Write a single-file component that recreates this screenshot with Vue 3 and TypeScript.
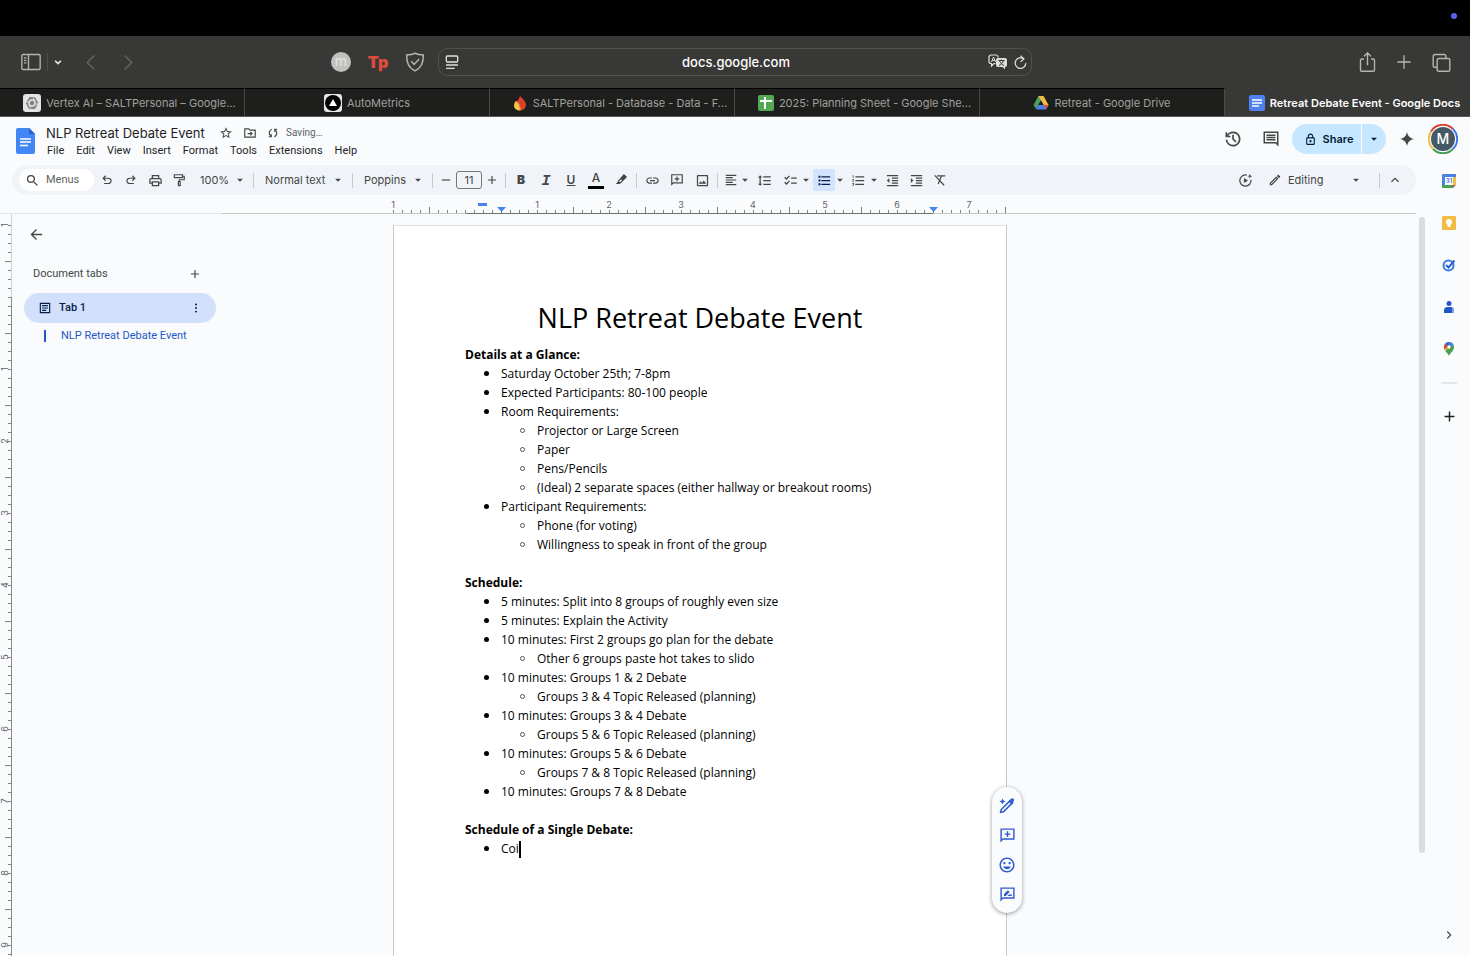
<script setup lang="ts">
import { h, ref } from 'vue'

interface Glyph { fill?: string; line?: string; w?: number }

const bubble = 'M22 2H2v20l4-4h16V2zm-2 14H5.17L4 17.17V4h16v12z'
const glyphs: Record<string, Glyph> = {
  search: { fill: 'M15.5 14h-.79l-.28-.27A6.471 6.471 0 0 0 16 9.5 6.5 6.5 0 1 0 9.5 16c1.61 0 3.09-.59 4.23-1.57l.27.28v.79l5 4.99L20.49 19l-4.99-5zm-6 0C7.01 14 5 11.99 5 9.5S7.01 5 9.5 5 14 7.01 14 9.5 11.99 14 9.5 14z' },
  undo: { fill: 'M7 19v-2h7.1q1.575 0 2.737-1T18 13.5T16.838 11T14.1 10H7.8l2.6 2.6L9 14L4 9l5-5l1.4 1.4L7.8 8h6.3q2.425 0 4.163 1.575T20 13.5t-1.737 3.925T14.1 19z' },
  redo: { fill: 'M9.9 19q-2.425 0-4.163-1.575T4 13.5t1.737-3.925T9.9 8h6.3l-2.6-2.6L15 4l5 5l-5 5l-1.4-1.4l2.6-2.6H9.9q-1.575 0-2.738 1T6 13.5T7.163 16T9.9 17H17v2z' },
  print: { fill: 'M19 8h-1V3H6v5H5c-1.66 0-3 1.34-3 3v6h4v4h12v-4h4v-6c0-1.66-1.34-3-3-3zM8 5h8v3H8V5zm8 12v2H8v-4h8v2zm2-2v-2H6v2H4v-4c0-.55.45-1 1-1h14c.55 0 1 .45 1 1v4h-2z' },
  paint: { line: 'M4 3h14v5H4zM18 5.500h3v6h-8.500v3M11 14.500h3v7h-3z', w: 2 },
  caret: { fill: 'M7 10l5 5 5-5z' },
  minus: { fill: 'M5 11h14v2H5z' },
  plus: { fill: 'M19 13h-6v6h-2v-6H5v-2h6V5h2v6h6v2z' },
  marker: { line: 'M8 13.500L17 3l4 4L11 16.500 8.500 17.500 7 16z', w: 2, fill: 'M11 10l6-7 4 4-6.500 6.500zM8 14l-5 5h6l2-2.500z' },
  link: { fill: 'M3.9 12c0-1.710 1.390-3.100 3.100-3.100h4V7H7c-2.760 0-5 2.240-5 5s2.240 5 5 5h4v-1.900H7c-1.710 0-3.100-1.390-3.100-3.100zM8 13h8v-2H8v2zm9-6h-4v1.900h4c1.710 0 3.100 1.390 3.100 3.100s-1.390 3.100-3.100 3.100h-4V17h4c2.760 0 5-2.240 5-5s-2.240-5-5-5z' },
  addComment: { fill: bubble + 'M11 14h2v-3h3V9h-3V6h-2v3H8v2h3z' },
  image: { fill: 'M19 5v14H5V5h14m0-2H5c-1.100 0-2 .9-2 2v14c0 1.100.9 2 2 2h14c1.100 0 2-.9 2-2V5c0-1.100-.9-2-2-2zM14.140 11.860l-3 3.870L9 13.140 6 17h12l-3.860-5.140z' },
  align: { fill: 'M15 15H3v2h12v-2zm0-8H3v2h12V7zM3 13h18v-2H3v2zm0 8h18v-2H3v2zM3 3v2h18V3H3z' },
  spacing: { fill: 'M6 7h2.500L5 3.500 1.500 7H4v10H1.500L5 20.500 8.500 17H6V7zm4-2v2h12V5H10zm0 14h12v-2H10v2zm0-6h12v-2H10v2z' },
  checklist: { fill: 'M22 7h-9v2h9V7zm0 8h-9v2h9v-2zM5.540 11L2 7.460l1.410-1.410 2.120 2.120 4.240-4.240 1.410 1.410L5.540 11zm0 8L2 15.460l1.410-1.410 2.120 2.120 4.240-4.240 1.410 1.410L5.540 19z' },
  bullets: { fill: 'M2.500 4.500h3v3h-3zM2.500 10.500h3v3h-3zM2.500 16.500h3v3h-3zM7 19h14v-2H7v2zm0-6h14v-2H7v2zm0-8v2h14V5H7z' },
  numbers: { fill: 'M2 17h2v.5H3v1h1v.5H2v1h3v-4H2v1zm1-9h1V4H2v1h1v3zm-1 3h1.800L2 13.100v.9h3v-1H3.200L5 10.900V10H2v1zm5-6v2h14V5H7zm0 14h14v-2H7v2zm0-6h14v-2H7v2z' },
  outdent: { fill: 'M11 17h10v-2H11v2zm-8-5l4 4V8l-4 4zm0 9h18v-2H3v2zM3 3v2h18V3H3zm8 6h10V7H11v2zm0 4h10v-2H11v2z' },
  indent: { fill: 'M3 21h18v-2H3v2zM3 8v8l4-4-4-4zm8 9h10v-2H11v2zM3 3v2h18V3H3zm8 6h10V7H11v2zm0 4h10v-2H11v2z' },
  clear: { line: 'M3 4l16 17M7 5h14M14.500 5L9 19', w: 2 },
  star: { fill: 'M22 9.240l-7.190-.62L12 2 9.190 8.630 2 9.240l5.460 4.730L5.820 21 12 17.270 18.180 21l-1.630-7.030L22 9.240zM12 15.400l-3.760 2.270 1-4.280-3.320-2.880 4.380-.38L12 6.100l1.710 4.040 4.380.38-3.320 2.880 1 4.280L12 15.400z' },
  move: { line: 'M3 5h7l2 2h9v12H3zM8 13h7M12.500 10l3 3-3 3', w: 2 },
  sync: { line: 'M9.500 4.500C2.500 8 3.500 15 8.500 19M3.500 19.500h5v-5M14.500 19.500C21.500 16 20.500 9 15.500 5M20.500 4.500h-5v5', w: 2.400 },
  history: { fill: 'M12 21q-3.450 0-6.012-2.287T3.050 13H5.100q.35 2.600 2.313 4.300T12 19q2.925 0 4.963-2.037T19 12t-2.037-4.962T12 5q-1.725 0-3.225.8T6.250 8H9v2H3V4h2v2.350q1.275-1.600 3.113-2.475T12 3q1.875 0 3.513.713t2.850 1.924t1.925 2.850T21 12t-.712 3.513t-1.925 2.850t-2.850 1.925T12 21m2.800-4.800L11 12.400V7h2v4.600l3.200 3.200z' },
  comment: { fill: 'M22 2H2v16h16l4 4V2zM20 4v13.170L18.830 16H4V4h16zM6 12h12v2H6zm0-3h12v2H6zm0-3h12v2H6z' },
  lock: { fill: 'M18 8h-1V6c0-2.760-2.240-5-5-5S7 3.240 7 6v2H6c-1.100 0-2 .9-2 2v10c0 1.100.9 2 2 2h12c1.100 0 2-.9 2-2V10c0-1.100-.9-2-2-2zM9 6c0-1.660 1.340-3 3-3s3 1.340 3 3v2H9V6zm9 14H6V10h12v10zm-6-3c1.100 0 2-.9 2-2s-.9-2-2-2-2 .9-2 2 .9 2 2 2z' },
  spark: { fill: 'M12 1c1 6.500 4.500 10 11 11-6.500 1-10 4.500-11 11-1-6.500-4.500-10-11-11 6.500-1 10-4.500 11-11z' },
  assist: { line: 'M14 3.300A9 9 0 1 0 20.800 11', w: 2, fill: 'M9.500 8v8l6.500-4zM19 1l1 3 3 1-3 1-1 3-1-3-3-1 3-1z' },
  pencil: { fill: 'M14.060 9.020l.92.92L5.920 19H5v-.92l9.060-9.060M17.660 3c-.25 0-.51.1-.7.29l-1.830 1.830 3.750 3.750 1.830-1.830c.39-.39.39-1.020 0-1.410l-2.340-2.340c-.2-.2-.45-.29-.71-.29zm-3.600 3.190L3 17.250V21h3.750L17.810 9.940l-3.750-3.750z' },
  up: { line: 'M6 15l6-6 6 6', w: 2 },
  right: { line: 'M9 6l6 6-6 6', w: 2 },
  back: { line: 'M21 12H4M12 4l-8 8 8 8', w: 2.200 },
  tab: { line: 'M4 4h16v16H4z', w: 2, fill: 'M7 7h10v2H7zM7 11h10v2H7zM7 15h7v2H7z' },
  dots: { fill: 'M12 7.500a1.700 1.700 0 1 0 0-3.400 1.700 1.700 0 0 0 0 3.400zM12 13.700a1.700 1.700 0 1 0 0-3.400 1.700 1.700 0 0 0 0 3.400zM12 19.900a1.700 1.700 0 1 0 0-3.400 1.700 1.700 0 0 0 0 3.400z' },
  magic: { line: 'M3.500 20.500l.8-3.800L16.500 4.500l3 3L7.300 19.700z', w: 2, fill: 'M6 2l1.200 2.800L10 6 7.200 7.200 6 10 4.800 7.200 2 6l2.800-1.200zM14 6l2.500-2.500 4 4L18 10zM19 1.500a2.500 2.500 0 1 1 0 5 2.500 2.500 0 0 1 0-5z' },
  emoji: { fill: 'M11.990 2C6.470 2 2 6.480 2 12s4.470 10 9.990 10C17.520 22 22 17.520 22 12S17.520 2 11.990 2zM12 20c-4.420 0-8-3.580-8-8s3.580-8 8-8 8 3.580 8 8-3.580 8-8 8zm3.500-9c.83 0 1.500-.67 1.500-1.500S16.330 8 15.500 8 14 8.670 14 9.500s.67 1.500 1.500 1.500zm-7 0c.83 0 1.500-.67 1.500-1.500S9.330 8 8.500 8 7 8.670 7 9.500 7.670 11 8.500 11zm3.500 6.500c2.330 0 4.310-1.460 5.110-3.500H6.890c.8 2.040 2.780 3.500 5.110 3.500z' },
  suggest: { fill: bubble + 'M7 14v-2.500l5.500-5.500L15 8.500 9.500 14zM12 14l2-2h4v2z' },
  sidebar: { line: 'M2.500 3h19a1.500 1.500 0 0 1 1.500 1.500v15a1.500 1.500 0 0 1-1.500 1.500h-19A1.500 1.500 0 0 1 1 19.500v-15A1.500 1.500 0 0 1 2.500 3zM9 3v18M3.500 7h3M3.500 10h3M3.500 13h3', w: 1.6 },
  down: { line: 'M5 9l7 7 7-7', w: 4 },
  prev: { line: 'M16 2L6 12l10 10', w: 2 },
  next: { line: 'M8 2l10 10L8 22', w: 2 },
  shield: { line: 'M12 1.500c3 1.500 6 2 10 2.200 0 9-2 14.800-10 19C4 18.500 2 12.700 2 3.700c4-.2 7-.7 10-2.200zM7.500 11l3.500 4 6-6.500', w: 1.8 },
  reader: { line: 'M5 3h14a1.500 1.500 0 0 1 1.500 1.500v6a1.500 1.500 0 0 1-1.500 1.500H5a1.500 1.500 0 0 1-1.500-1.500v-6A1.500 1.500 0 0 1 5 3zM3 16.500h18M3 21.500h13', w: 2 },
  reload: { line: 'M17.500 6.500A8.500 8.500 0 1 0 20.500 13M12 1l5.500 5.500L12 11', w: 2 },
  share: { line: 'M8 8H5.500A1.500 1.500 0 0 0 4 9.500v11A1.500 1.500 0 0 0 5.500 22h13a1.500 1.500 0 0 0 1.500-1.500v-11A1.500 1.500 0 0 0 18.500 8H16M12 15V1.500M8 5l4-4 4 4', w: 1.6 },
  add: { line: 'M12 2v20M2 12h20', w: 2 },
  windows: { line: 'M8.500 7h12A2 2 0 0 1 22.500 9v12a2 2 0 0 1-2 2h-12a2 2 0 0 1-2-2V9a2 2 0 0 1 2-2zM17.500 7V4a2 2 0 0 0-2-2h-12a2 2 0 0 0-2 2v12a2 2 0 0 0 2 2h3', w: 1.8 },
}

const Icon = (props: { name: string; size?: number }) => {
  const g = glyphs[props.name]
  const size = props.size ?? 16
  return h('svg', { width: size, height: size, viewBox: '0 0 24 24', 'aria-hidden': 'true' }, [
    g.fill ? h('path', { d: g.fill, fill: 'currentColor', 'fill-rule': 'evenodd' }) : null,
    g.line ? h('path', { d: g.line, fill: 'none', stroke: 'currentColor', 'stroke-width': g.w }) : null,
  ])
}
Icon.props = ['name', 'size']

const url = ref('docs.google.com')
const title = ref('NLP Retreat Debate Event')
const fontSize = ref('11')

const tabs = [
  { icon: 'vertex', text: 'Vertex AI – SALTPersonal – Google...', long: true },
  { icon: 'auto', text: 'AutoMetrics', long: false },
  { icon: 'fire', text: 'SALTPersonal - Database - Data - F...', long: true },
  { icon: 'sheets', text: '2025: Planning Sheet - Google She...', long: true },
  { icon: 'drive', text: 'Retreat - Google Drive', long: false },
  { icon: 'docs', text: 'Retreat Debate Event - Google Docs', long: true },
]
const menus = ['File', 'Edit', 'View', 'Insert', 'Format', 'Tools', 'Extensions', 'Help']

interface Item { text: string; sub?: string[]; caret?: boolean }
const sections: { heading: string; items: Item[] }[] = [
  {
    heading: 'Details at a Glance:',
    items: [
      { text: 'Saturday October 25th; 7-8pm' },
      { text: 'Expected Participants: 80-100 people' },
      { text: 'Room Requirements:', sub: ['Projector or Large Screen', 'Paper', 'Pens/Pencils', '(Ideal) 2 separate spaces (either hallway or breakout rooms)'] },
      { text: 'Participant Requirements:', sub: ['Phone (for voting)', 'Willingness to speak in front of the group'] },
    ],
  },
  {
    heading: 'Schedule:',
    items: [
      { text: '5 minutes: Split into 8 groups of roughly even size' },
      { text: '5 minutes: Explain the Activity' },
      { text: '10 minutes: First 2 groups go plan for the debate', sub: ['Other 6 groups paste hot takes to slido'] },
      { text: '10 minutes: Groups 1 & 2 Debate', sub: ['Groups 3 & 4 Topic Released (planning)'] },
      { text: '10 minutes: Groups 3 & 4 Debate', sub: ['Groups 5 & 6 Topic Released (planning)'] },
      { text: '10 minutes: Groups 5 & 6 Debate', sub: ['Groups 7 & 8 Topic Released (planning)'] },
      { text: '10 minutes: Groups 7 & 8 Debate' },
    ],
  },
  { heading: 'Schedule of a Single Debate:', items: [{ text: 'Coi', caret: true }] },
]

const inch = 72
const ticks = (count: number) => Array.from({ length: count }, (_, i) => ({ at: i * 9, half: i % 8 === 4 }))
const labels = (count: number) =>
  Array.from({ length: count }, (_, i) => ({ at: i * inch, n: Math.abs(i - 1) })).filter((l) => l.n > 0)
const hTicks = ticks(69)
const hLabels = labels(9)
const vTicks = ticks(82)
const vLabels = labels(11)
</script>

<template>
  <div class="screen">
    <div class="menubar"><i class="dot"></i></div>

    <header class="browser">
      <div class="nav">
        <button class="bb" aria-label="Sidebar"><Icon name="sidebar" :size="20" /></button>
        <i class="vline"></i>
        <button class="bb bright small" aria-label="Tab groups"><Icon name="down" :size="10" /></button>
        <button class="bb dim" aria-label="Back"><Icon name="prev" :size="17" /></button>
        <button class="bb dim" aria-label="Forward"><Icon name="next" :size="17" /></button>
        <div class="ext">
          <button class="bb"><span class="mcircle">m</span></button>
          <button class="bb"><span class="tp">Tp</span></button>
          <button class="bb" aria-label="Shield"><Icon name="shield" :size="20" /></button>
        </div>
      </div>
      <div class="url">
        <button class="ub" aria-label="Reader"><Icon name="reader" :size="16" /></button>
        <input v-model="url" aria-label="Address" />
        <button class="ub" aria-label="Translate">
          <svg width="20" height="16" viewBox="0 0 20 16">
            <path d="M10 3.500V3a2 2 0 0 0-2-2H3a2 2 0 0 0-2 2v4.500a2 2 0 0 0 2 2h.5V12l2.500-2.500h1.500" fill="none" stroke="#dededc" stroke-width="1.200" />
            <path d="M3.500 8L5.500 3l2 5M4.200 6.500h2.600" fill="none" stroke="#dededc" />
            <path d="M10 4h7a2 2 0 0 1 2 2v5a2 2 0 0 1-2 2v2.500L14.500 13H10a2 2 0 0 1-2-2V6a2 2 0 0 1 2-2z" fill="#dededc" />
            <path d="M10.500 6.500h6M13.500 5.500v1M15.500 6.500c-.5 2-2 4-4.500 5M11.500 6.500c.5 2 2 4 4.500 5" fill="none" stroke="#383836" />
          </svg>
        </button>
        <button class="ub" aria-label="Reload"><Icon name="reload" :size="15" /></button>
      </div>
      <div class="acts">
        <button class="bb" aria-label="Share"><Icon name="share" :size="21" /></button>
        <button class="bb" aria-label="New tab"><Icon name="add" :size="16" /></button>
        <button class="bb" aria-label="Tab overview"><Icon name="windows" :size="19" /></button>
      </div>
    </header>

    <nav class="tabs">
      <a v-for="(t, i) in tabs" :key="t.text" href="#" class="tab" :class="{ long: t.long, active: i === 5 }">
        <svg v-if="t.icon === 'vertex'" width="18" height="18" viewBox="0 0 18 18">
          <rect width="18" height="18" rx="3" fill="#e3e3e3" />
          <path d="M6.500 3h5.500L15.300 9 12 15H6L2.700 9z" fill="#828282" />
          <circle cx="9" cy="9" r="3" fill="none" stroke="#e3e3e3" stroke-width="1.500" />
          <path d="M2.500 8h3M12.500 10h3M10 3.500l2 3M6 11.500l2 3" stroke="#e3e3e3" />
        </svg>
        <svg v-else-if="t.icon === 'auto'" width="18" height="18" viewBox="0 0 18 18">
          <rect width="18" height="18" rx="3" fill="#e8e8e8" />
          <circle cx="9" cy="9" r="8" fill="#000" />
          <path d="M9 5l4 7H5z" fill="#fff" />
        </svg>
        <svg v-else-if="t.icon === 'fire'" width="16" height="16" viewBox="0 0 16 16">
          <path d="M8 1c3 3 6 5.500 6 9a5.500 5.500 0 0 1-6 5.500A5.500 5.500 0 0 1 3 10c0-2.500 4-5 5-9z" fill="#d9412a" />
          <path d="M3.500 6c2 1 5.500 3.500 5 9.300C5 16 2 13.500 2 10.500 2 8.500 3 7.500 3.500 6z" fill="#f7c544" />
          <path d="M8 15.500c1-3 .5-6-1.500-8-.8-1-2-1.500-3-1.500 2 1 4.500 5 4.500 9.500z" fill="#e8762d" />
        </svg>
        <svg v-else-if="t.icon === 'sheets'" width="16" height="16" viewBox="0 0 16 16">
          <rect width="16" height="16" rx="2" fill="#55a853" />
          <path d="M2 6h12M7 2v12" stroke="#fff" stroke-width="2" />
        </svg>
        <svg v-else-if="t.icon === 'drive'" width="16" height="14" viewBox="0 0 16 14">
          <path d="M5.500 0h5L8 4.500 3 13 .500 9z" fill="#4ba35a" />
          <path d="M5.500 0h5L15.500 9h-5z" fill="#f4bb41" />
          <path d="M5 9h10.500L13 13.500H3z" fill="#4a80ee" />
          <path d="M10.500 9h5L13 13.500z" fill="#dd4f3e" />
          <path d="M8 4.500L10.500 9h-5z" fill="#1e1e1d" />
        </svg>
        <svg v-else width="16" height="16" viewBox="0 0 16 16">
          <rect width="16" height="16" rx="2" fill="#4f80ee" />
          <path d="M3 5h10M3 8h10M3 11h7" stroke="#fff" stroke-width="1.500" />
        </svg>
        <span>{{ t.text }}</span>
      </a>
    </nav>

    <div class="dochead">
      <svg class="logo" width="20" height="26" viewBox="0 0 20 26">
        <path d="M2 0h11l6 6v18a2 2 0 0 1-2 2H2a2 2 0 0 1-2-2V2a2 2 0 0 1 2-2z" fill="#4285f4" />
        <path d="M13 0l6 6h-6z" fill="#2a62c9" />
        <path d="M4 11h11M4 14h11M4 17.500h8" stroke="#fff" stroke-width="1.500" />
      </svg>
      <div class="names">
        <div class="titlerow">
          <input v-model="title" class="title" aria-label="Document title" />
          <button class="ib" aria-label="Star"><Icon name="star" :size="14" /></button>
          <button class="ib" aria-label="Move"><Icon name="move" :size="14" /></button>
          <Icon name="sync" :size="12" /><span class="saving">Saving…</span>
        </div>
        <div class="menus"><button v-for="m in menus" :key="m">{{ m }}</button></div>
      </div>
      <div class="headacts">
        <button class="ib" aria-label="History"><Icon name="history" :size="20" /></button>
        <button class="ib" aria-label="Comments"><Icon name="comment" :size="18" /></button>
        <div class="sharepill">
          <button class="sharemain"><Icon name="lock" :size="13" />Share</button>
          <button class="sharemore" aria-label="Share options"><Icon name="caret" :size="14" /></button>
        </div>
        <button class="ib spark" aria-label="Ask Gemini"><Icon name="spark" :size="16" /></button>
        <button class="ib avatar" aria-label="Account">
          <svg width="30" height="30" viewBox="0 0 30 30">
            <g fill="none" stroke-width="2">
              <path d="M3 7.500A14 14 0 0 1 25 5" stroke="#d93f31" />
              <path d="M25 5a14 14 0 0 1 0 20" stroke="#4073e8" />
              <path d="M25 25A14 14 0 0 1 5 25" stroke="#3f9c4c" />
              <path d="M5 25A14 14 0 0 1 3 7.500" stroke="#eebc3e" />
            </g>
            <circle cx="15" cy="15" r="12" fill="#455a64" />
            <text x="15" y="20" text-anchor="middle" class="initial">M</text>
          </svg>
        </button>
      </div>
    </div>

    <div class="body">
      <div class="left">
        <div class="toolbar">
          <label class="search"><Icon name="search" :size="15" /><input placeholder="Menus" aria-label="Menus" /></label>
          <div class="group">
            <button v-for="n in ['undo', 'redo', 'print', 'paint']" :key="n" class="tb" :aria-label="n"><Icon :name="n" :size="n === 'print' ? 15 : 14" /></button>
          </div>
          <label class="drop zoom"><select aria-label="Zoom"><option>100%</option></select><Icon name="caret" :size="14" /></label>
          <i class="sep"></i>
          <label class="drop style"><select aria-label="Styles"><option>Normal text</option></select><Icon name="caret" :size="14" /></label>
          <i class="sep"></i>
          <label class="drop font"><select aria-label="Font"><option>Poppins</option></select><Icon name="caret" :size="14" /></label>
          <i class="sep"></i>
          <button class="step" aria-label="Decrease font size"><Icon name="minus" :size="14" /></button>
          <input v-model="fontSize" class="size" aria-label="Font size" />
          <button class="step" aria-label="Increase font size"><Icon name="plus" :size="14" /></button>
          <i class="sep"></i>
          <div class="group one">
            <button class="tb letter"><b>B</b></button>
            <button class="tb letter slant"><i>I</i></button>
            <button class="tb letter"><u>U</u></button>
            <button class="tb letter color">A</button>
            <button class="tb" aria-label="Highlight"><Icon name="marker" :size="14" /></button>
          </div>
          <i class="sep"></i>
          <div class="group one">
            <button class="tb" aria-label="Link"><Icon name="link" :size="15" /></button>
            <button class="tb" aria-label="Add comment"><Icon name="addComment" :size="14" /></button>
            <button class="tb" aria-label="Image"><Icon name="image" :size="15" /></button>
          </div>
          <i class="sep"></i>
          <div class="group two">
            <div class="split narrow"><button aria-label="Align"><Icon name="align" :size="14" /></button><button aria-label="Align options"><Icon name="caret" :size="14" /></button></div>
            <button class="tb wide" aria-label="Spacing"><Icon name="spacing" :size="15" /></button>
            <div class="split"><button aria-label="Checklist"><Icon name="checklist" :size="15" /></button><button aria-label="Checklist options"><Icon name="caret" :size="14" /></button></div>
            <div class="split"><button class="on" aria-label="Bulleted list"><Icon name="bullets" :size="15" /></button><button aria-label="Bullet options"><Icon name="caret" :size="14" /></button></div>
            <div class="split"><button aria-label="Numbered list"><Icon name="numbers" :size="15" /></button><button aria-label="Number options"><Icon name="caret" :size="14" /></button></div>
            <button class="tb slim" aria-label="Outdent"><Icon name="outdent" :size="15" /></button>
            <button class="tb slim" aria-label="Indent"><Icon name="indent" :size="15" /></button>
            <button class="tb slim" aria-label="Clear formatting"><Icon name="clear" :size="14" /></button>
          </div>
          <div class="mode">
            <button class="tb wide" aria-label="Assist"><Icon name="assist" :size="15" /></button>
            <label class="drop editing"><Icon name="pencil" :size="14" /><select aria-label="Mode"><option>Editing</option></select><Icon name="caret" :size="14" /></label>
            <i class="sep"></i>
            <button class="tb" aria-label="Hide menus"><Icon name="up" :size="14" /></button>
          </div>
        </div>

        <div class="rulerrow">
          <i class="faint"></i>
          <svg class="hruler" width="614" height="18" viewBox="0 0 614 18">
            <path v-for="t in hTicks" :key="t.at" :d="`M${t.at}.5 ${t.half ? 12 : 15}V18`" stroke="#80837f" />
            <path d="M73 18.500h467" stroke="#6f726c" />
            <text v-for="l in hLabels" :key="l.at" :x="l.at" y="13" text-anchor="middle">{{ l.n }}</text>
            <path d="M85 8h9v3h-9zM104 12h9l-4.500 5zM536 12h9l-4.500 5z" fill="#4b82ef" />
          </svg>
        </div>

        <div class="work">
          <div class="canvas">
            <aside class="side">
              <svg class="vruler" width="12" height="740" viewBox="0 0 12 740">
                <path d="M11.500 0v83" stroke="#d0d2d4" />
                <path d="M11.500 83v660" stroke="#8b8e8b" />
                <path v-for="t in vTicks" :key="t.at" :d="`M${t.half ? 5 : 8} ${t.at + 11}.5H11`" stroke="#80837f" />
                <text v-for="l in vLabels" :key="l.at" :transform="`translate(8 ${l.at + 11}) rotate(-90)`" text-anchor="middle">{{ l.n }}</text>
              </svg>
              <div class="outline">
                <button class="ib" aria-label="Close outline"><Icon name="back" :size="15" /></button>
                <div class="tabshead"><span>Document tabs</span><button class="ib" aria-label="Add tab"><Icon name="plus" :size="14" /></button></div>
                <div class="tabpill"><Icon name="tab" :size="14" /><a href="#">Tab 1</a><button class="ib" aria-label="Tab options"><Icon name="dots" :size="14" /></button></div>
                <a href="#" class="entry">NLP Retreat Debate Event</a>
              </div>
            </aside>
            <article class="page">
              <h1>NLP Retreat Debate Event</h1>
              <section v-for="s in sections" :key="s.heading">
                <h2>{{ s.heading }}</h2>
                <ul>
                  <li v-for="it in s.items" :key="it.text">
                    {{ it.text }}<i v-if="it.caret" class="cursor"></i>
                    <ul v-if="it.sub"><li v-for="x in it.sub" :key="x">{{ x }}</li></ul>
                  </li>
                </ul>
              </section>
              <div class="float">
                <button v-for="n in ['magic', 'addComment', 'emoji', 'suggest']" :key="n" :aria-label="n"><Icon :name="n" :size="n === 'magic' || n === 'emoji' ? 18 : 17" /></button>
              </div>
            </article>
          </div>
          <div class="scroll"><i></i></div>
        </div>
      </div>

      <aside class="panel">
        <button aria-label="Calendar">
          <svg width="14" height="14" viewBox="0 0 14 14">
            <path d="M0 1a1 1 0 0 1 1-1h13v14H1a1 1 0 0 1-1-1z" fill="#4a80e8" />
            <path d="M11 3h3v8h-3z" fill="#f4bc42" /><path d="M0 11h11v3H1a1 1 0 0 1-1-1z" fill="#46a150" />
            <path d="M11 11h3l-3 3z" fill="#dd4b3e" /><path d="M14 11v3h-3z" fill="#f9fbfd" />
            <path d="M3 3h8v8H3z" fill="#fff" />
            <text x="7" y="9" text-anchor="middle" class="cal">31</text>
          </svg>
        </button>
        <button aria-label="Keep">
          <svg width="14" height="14" viewBox="0 0 14 14"><rect width="14" height="14" rx="1" fill="#f2bd42" /><circle cx="7" cy="6" r="3" fill="#fff" /><path d="M5.500 8h3v3h-3z" fill="#fff" /></svg>
        </button>
        <button aria-label="Tasks">
          <svg width="14" height="14" viewBox="0 0 14 14"><circle cx="6.500" cy="7.500" r="5" fill="none" stroke="#3b78e7" stroke-width="2" /><path d="M4 7l2.500 2.500L12.500 2.500" fill="none" stroke="#2a62d0" stroke-width="2" /></svg>
        </button>
        <button aria-label="Contacts">
          <svg width="14" height="14" viewBox="0 0 14 14"><circle cx="7" cy="3.500" r="2.500" fill="#2457c5" /><path d="M2 13v-2.500A3.500 3.500 0 0 1 5.500 7h3a3.500 3.500 0 0 1 3.500 3.500V13z" fill="#2457c5" /><path d="M10 7.500a3.500 3.500 0 0 1 2 3V13h-2z" fill="#7ea5f3" /></svg>
        </button>
        <button aria-label="Maps">
          <svg width="14" height="14" viewBox="0 0 14 14">
            <path d="M7 14C6.300 11.500 2 9 2 5a5 5 0 0 1 10 0c0 4-4.300 6.500-5 9z" fill="#46a150" />
            <path d="M7 0a5 5 0 0 1 4.500 3L7 5z" fill="#4a80e8" /><path d="M7 0L7 5 3 2A5 5 0 0 1 7 0z" fill="#3467d6" />
            <path d="M3 2l4 3-4.500 2.500A5 5 0 0 1 3 2z" fill="#dd4b3e" /><path d="M7 5L3.700 9A7 7 0 0 1 2.300 7z" fill="#f4bc42" />
            <circle cx="7" cy="5" r="1.700" fill="#fff" />
          </svg>
        </button>
        <hr />
        <button aria-label="Add-ons"><Icon name="plus" :size="17" /></button>
        <button class="hide" aria-label="Hide panel"><Icon name="right" :size="14" /></button>
      </aside>
    </div>
  </div>
</template>

<style>
html, body { margin: 0; background: #f9fbfd; }
</style>

<style scoped>
.screen { height: 100vh; overflow: hidden; display: flex; flex-direction: column; background: #f9fbfd; color: #444746; font: 11px/16px Inter, Roboto, sans-serif; }
.screen *, li::before { box-sizing: border-box; }
button, input, select { font: inherit; color: inherit; background: none; border: 0; padding: 0; margin: 0; outline: 0; }
button { display: inline-flex; align-items: center; justify-content: center; flex: none; }
svg { display: block; flex: none; }
a { color: inherit; text-decoration: none; }

.menubar { height: 36px; flex: none; background: #000; display: flex; justify-content: flex-end; padding: 13px 13px 0 0; }
.dot { width: 6px; height: 6px; border-radius: 50%; background: #6260ea; }

.browser { height: 52px; flex: none; background: #383836; color: #b4b4b2; display: grid; grid-template-columns: 1fr minmax(0, 594px) 1fr; align-items: center; }
.nav { display: flex; align-items: center; padding-left: 18px; }
.bb { width: 26px; height: 28px; }
.bb.small { width: 20px; }
.bb.bright { color: #e8e8e6; }
.bb.dim { color: #656563; margin-left: 10px; }
.vline { width: 1px; height: 18px; margin-left: 3px; background: #4c4c4a; }
.ext { margin-left: auto; display: flex; gap: 11px; padding-right: 10px; }
.mcircle { width: 20px; height: 20px; border-radius: 50%; background: #c1c1bf; color: #e4e4e2; font-size: 14px; line-height: 18px; }
.tp { color: #e04b40; font-size: 16px; font-weight: 900; }
.url { height: 28px; border: 1px solid #50504e; border-radius: 9px; display: flex; align-items: center; padding: 0 0 0 2px; color: #dededc; }
.url input { flex: 1; min-width: 0; text-align: center; color: #fff; font-size: 13px; line-height: 18px; font-weight: 500; padding-left: 22px; }
.ub { width: 22px; height: 24px; }
.acts { display: flex; justify-content: flex-end; gap: 11px; padding-right: 16px; }

.tabs { height: 29px; flex: none; display: grid; grid-template-columns: repeat(6, minmax(0, 1fr)); background: #1e1e1d; color: #a0a09e; border-bottom: 1px solid #5a5a5c; font-size: 11px; }
.tab { display: flex; align-items: center; justify-content: center; gap: 5px; padding: 0 4px; border-top: 1px solid #000; border-right: 1px solid #4a4a48; white-space: nowrap; }
.tab.long { padding-left: 19px; }
.tab.active { background: #383836; color: #fff; font-weight: 600; border-color: #383836; }

.dochead { height: 48px; flex: none; display: flex; color: #444746; padding: 6px 12px 0 16px; }
.logo { margin-top: 5px; }
.names { margin-left: 10px; }
.titlerow { display: flex; align-items: center; height: 19px; }
.title { width: 168px; color: #1f1f1f; font-size: 13px; line-height: 18px; }
.ib { width: 24px; height: 24px; }
.titlerow .ib { height: 18px; }
.titlerow > svg { margin-left: 5px; }
.saving { margin-left: 7px; font: 10px/16px Roboto, sans-serif; color: #5f6368; }
.menus { display: flex; gap: 12px; padding-left: 1px; color: #1f1f1f; font-family: Roboto, sans-serif; }
.menus button { height: 18px; }
.headacts { margin: 1px 0 0 auto; display: flex; align-items: center; height: 30px; color: #444746; }
.headacts > .ib + .ib { margin-left: 14px; }
.sharepill { display: flex; gap: 1px; margin-left: 9px; height: 30px; color: #001d35; }
.sharepill button { background: #c7e6ff; }
.sharemain { width: 69px; gap: 6px; font-size: 11px; font-weight: 600; border-radius: 15px 0 0 15px; padding-left: 4px; }
.sharemore { width: 24px; border-radius: 0 15px 15px 0; }
.spark { margin-left: 9px; }
.headacts .avatar.ib { width: 30px; height: 30px; margin-left: 9px; }
.initial { font-size: 14px; font-weight: 500; fill: #fff; }

.body { flex: 1; min-height: 0; display: flex; }
.left { flex: 1; min-width: 0; display: flex; flex-direction: column; }
.toolbar { height: 30px; flex: none; margin: 0 12px; padding: 0 9px 0 7px; border-radius: 15px; background: #f0f4f9; display: flex; align-items: center; }
.search { width: 75px; height: 22px; border-radius: 11px; background: #fff; display: flex; align-items: center; gap: 6px; padding-left: 6px; margin-right: 1px; }
.search input { width: 44px; font-family: Roboto, sans-serif; }
.search input::placeholder { color: #5f6361; opacity: 1; }
.group { display: flex; align-items: center; }
.one { gap: 1px; }
.two { gap: 2px; }
.tb { width: 24px; height: 22px; }
.tb.wide { width: 26px; }
.tb.slim { width: 22px; }
.drop { display: flex; align-items: center; height: 22px; }
.drop select { appearance: none; flex: 1; min-width: 0; }
.zoom { width: 59px; padding: 0 3px 0 9px; }
.style { width: 92px; padding: 0 4px 0 8px; }
.font { width: 73px; padding: 0 4px 0 8px; }
.sep { width: 1px; height: 15px; margin: 0 3px; background: #c7cacd; flex: none; }
.step { width: 20px; height: 22px; }
.size { width: 26px; height: 18px; border: 1px solid #747775; border-radius: 3px; text-align: center; }
.letter { font-size: 12px; font-weight: 600; }
.slant { font-family: "Liberation Mono", monospace; font-size: 15px; line-height: 22px; font-weight: 700; padding-top: 3px; }
.color { font-weight: 500; line-height: 12px; background: linear-gradient(#000, #000) center 17px / 16px 3px no-repeat; padding-bottom: 4px; }
.split { display: flex; height: 22px; }
.split button { width: 22px; }
.split button + button { width: 10px; overflow: visible; }
.split button + button svg { margin: 0 -3px; }
.split.narrow button { width: 20px; }
.split.narrow button + button { width: 8px; }
.split .on { background: #d3e3fd; color: #041e49; border-radius: 2px; }
.mode { margin-left: auto; display: flex; align-items: center; }
.editing { width: 114px; border-radius: 11px; background: #f2f4fa; padding: 0 9px 0 10px; gap: 6px; margin-right: 4px; }

.rulerrow { height: 19px; flex: none; margin: 0 12px 0 0; padding: 0 16px 0 0; display: flex; justify-content: center; border-bottom: 1px solid #c4c7c5; position: relative; }
.faint { position: absolute; left: 0; bottom: -1px; width: 222px; height: 1px; background: #e3e5e8; }
.hruler, .vruler { overflow: visible; }
.hruler { position: relative; }
.hruler text, .vruler text { font-size: 9px; fill: #5f6368; }
.work { flex: 1; min-height: 0; display: flex; }
.canvas { flex: 1; min-width: 0; display: grid; grid-template-columns: 1fr 614px 1fr; }
.side { display: flex; height: 0; }
.outline { width: 204px; padding: 8px 0 0 12px; font-family: Roboto, sans-serif; }
.tabshead { display: flex; justify-content: space-between; align-items: center; height: 24px; margin: 15px 9px 7px; }
.tabpill { height: 30px; border-radius: 15px; background: #d3e0fb; color: #041e49; display: flex; align-items: center; padding: 0 8px 0 14px; font-weight: 500; gap: 7px; }
.tabpill .ib { margin-left: auto; }
.entry { display: block; margin: 7px 0 0 20px; padding-left: 15px; line-height: 12px; border-left: 2px solid #2457c5; color: #2457c5; white-space: nowrap; }

.page { position: relative; margin-top: 11px; min-height: 740px; background: #fff; border: 1px solid #c7c9cb; border-top-color: #e0e2e4; padding: 71px; color: #000; font: 12px/19px "Open Sans", Inter, sans-serif; }
h1 { margin: 0 0 6px; text-align: center; font-size: 27px; line-height: 42px; font-weight: 400; white-space: nowrap; }
h2 { margin: 0; font-size: 12px; line-height: 19px; font-weight: 700; }
section + section { margin-top: 19px; }
ul { list-style: none; margin: 0; padding: 0 0 0 36px; }
li { position: relative; white-space: nowrap; }
li::before { content: ""; position: absolute; left: -17px; top: 7px; width: 5px; height: 5px; border-radius: 50%; background: #000; }
li li::before { background: none; border: 1px solid #555; }
.cursor { display: inline-block; width: 2px; height: 17px; background: #000; vertical-align: middle; }
.float { position: absolute; right: -16px; top: 561px; width: 30px; height: 126px; border-radius: 15px; background: #f9fbfd; color: #2f5bd0; box-shadow: 0 1px 4px rgba(0, 0, 0, .4); display: flex; flex-direction: column; padding: 4px 0; }
.float button { flex: 1; }

.scroll { width: 28px; padding: 3px 3px 0 19px; }
.scroll i { display: block; width: 6px; height: 86%; border-radius: 3px; background: #dadce0; }

.panel { width: 42px; flex: none; display: flex; flex-direction: column; align-items: center; padding-top: 1px; }
.panel button { width: 30px; height: 30px; margin-bottom: 12px; color: #1f1f1f; }
.panel hr { width: 16px; border: 0; border-top: 2px solid #e3e5e8; margin: 6px 0 17px; }
.panel .hide { margin: auto 0 6px; color: #444746; }
.cal { font-size: 6px; font-weight: 700; fill: #4a80e8; }
</style>
